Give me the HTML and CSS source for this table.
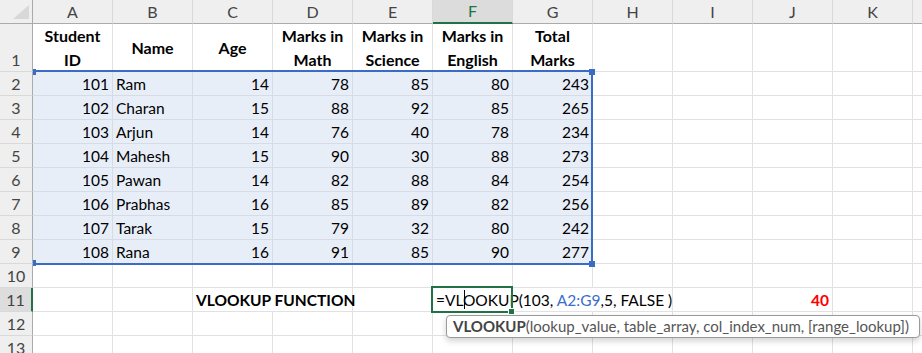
FILE: index.html
```html
<!DOCTYPE html>
<html>
<head>
<meta charset="utf-8">
<link rel="stylesheet" href="styles.css">
</head>
<body>
<div class="sheet">
  <div class="grid">
    <div class="corner"><svg class="corner-tri" width="16" height="14" viewBox="0 0 16 14"><polygon points="16,0 16,14 0,14" fill="#d8d8d8"/></svg></div>
    <div class="ch">A</div><div class="ch">B</div><div class="ch">C</div><div class="ch">D</div><div class="ch">E</div><div class="ch active">F</div><div class="ch">G</div><div class="ch">H</div><div class="ch">I</div><div class="ch">J</div><div class="ch">K</div><div class="ch"></div>

    <div class="rh">1</div>
    <div class="c hd">Student<br>ID</div><div class="c hd">Name</div><div class="c hd">Age</div><div class="c hd">Marks in<br>Math</div><div class="c hd">Marks in<br>Science</div><div class="c hd">Marks in<br>English</div><div class="c hd">Total<br>Marks</div><div class="c"></div><div class="c"></div><div class="c"></div><div class="c"></div><div class="c"></div>

    <div class="rh">2</div>
    <div class="c sel num">101</div><div class="c sel">Ram</div><div class="c sel num">14</div><div class="c sel num">78</div><div class="c sel num">85</div><div class="c sel num">80</div><div class="c sel num">243</div><div class="c"></div><div class="c"></div><div class="c"></div><div class="c"></div><div class="c"></div>

    <div class="rh">3</div>
    <div class="c sel num">102</div><div class="c sel">Charan</div><div class="c sel num">15</div><div class="c sel num">88</div><div class="c sel num">92</div><div class="c sel num">85</div><div class="c sel num">265</div><div class="c"></div><div class="c"></div><div class="c"></div><div class="c"></div><div class="c"></div>

    <div class="rh">4</div>
    <div class="c sel num">103</div><div class="c sel">Arjun</div><div class="c sel num">14</div><div class="c sel num">76</div><div class="c sel num">40</div><div class="c sel num">78</div><div class="c sel num">234</div><div class="c"></div><div class="c"></div><div class="c"></div><div class="c"></div><div class="c"></div>

    <div class="rh">5</div>
    <div class="c sel num">104</div><div class="c sel">Mahesh</div><div class="c sel num">15</div><div class="c sel num">90</div><div class="c sel num">30</div><div class="c sel num">88</div><div class="c sel num">273</div><div class="c"></div><div class="c"></div><div class="c"></div><div class="c"></div><div class="c"></div>

    <div class="rh">6</div>
    <div class="c sel num">105</div><div class="c sel">Pawan</div><div class="c sel num">14</div><div class="c sel num">82</div><div class="c sel num">88</div><div class="c sel num">84</div><div class="c sel num">254</div><div class="c"></div><div class="c"></div><div class="c"></div><div class="c"></div><div class="c"></div>

    <div class="rh">7</div>
    <div class="c sel num">106</div><div class="c sel">Prabhas</div><div class="c sel num">16</div><div class="c sel num">85</div><div class="c sel num">89</div><div class="c sel num">82</div><div class="c sel num">256</div><div class="c"></div><div class="c"></div><div class="c"></div><div class="c"></div><div class="c"></div>

    <div class="rh">8</div>
    <div class="c sel num">107</div><div class="c sel">Tarak</div><div class="c sel num">15</div><div class="c sel num">79</div><div class="c sel num">32</div><div class="c sel num">80</div><div class="c sel num">242</div><div class="c"></div><div class="c"></div><div class="c"></div><div class="c"></div><div class="c"></div>

    <div class="rh">9</div>
    <div class="c sel num">108</div><div class="c sel">Rana</div><div class="c sel num">16</div><div class="c sel num">91</div><div class="c sel num">85</div><div class="c sel num">90</div><div class="c sel num">277</div><div class="c"></div><div class="c"></div><div class="c"></div><div class="c"></div><div class="c"></div>

    <div class="rh">10</div>
    <div class="c"></div><div class="c"></div><div class="c"></div><div class="c"></div><div class="c"></div><div class="c"></div><div class="c"></div><div class="c"></div><div class="c"></div><div class="c"></div><div class="c"></div><div class="c"></div>

    <div class="rh active">11</div>
    <div class="c"></div><div class="c"></div><div class="c span2 bold">VLOOKUP FUNCTION</div><div class="c"></div><div class="c span3 formula">=VLOOKUP(103, <span class="ref">A2:G9</span>,5, FALSE )</div><div class="c"></div><div class="c num result">40</div><div class="c"></div><div class="c"></div>

    <div class="rh">12</div>
    <div class="c"></div><div class="c"></div><div class="c"></div><div class="c"></div><div class="c"></div><div class="c"></div><div class="c"></div><div class="c"></div><div class="c"></div><div class="c"></div><div class="c"></div><div class="c"></div>

    <div class="rh">13</div>
    <div class="c"></div><div class="c"></div><div class="c"></div><div class="c"></div><div class="c"></div><div class="c"></div><div class="c"></div><div class="c"></div><div class="c"></div><div class="c"></div><div class="c"></div><div class="c"></div>
  </div>

  <div class="range">
    <span class="handle h-tl"></span>
    <span class="handle h-tr"></span>
    <span class="handle h-bl"></span>
    <span class="handle h-br"></span>
  </div>
  <div class="active-box"><span class="fill-handle"></span></div>
  <div class="caret"></div>
  <div class="tooltip"><b>VLOOKUP</b>(lookup_value, table_array, col_index_num, [range_lookup])</div>
</div>
</body>
</html>
```

FILE: styles.css
```css
html, body {
  margin: 0;
  padding: 0;
  background: #ffffff;
  overflow: hidden;
}

.sheet {
  position: relative;
  width: 922px;
  height: 353px;
  overflow: hidden;
  font-family: Lato, "Liberation Sans", sans-serif;
}

.grid {
  display: grid;
  grid-template-columns: 33px repeat(12, 80px);
  grid-template-rows: 24px 48px repeat(12, 24px);
}

.grid > div {
  box-sizing: border-box;
}

.corner {
  background: #efefef;
  border-right: 1px solid #ababab;
  border-bottom: 1px solid #ababab;
  position: relative;
}

.corner-tri {
  position: absolute;
  left: 13px;
  top: 5px;
}

.ch {
  background: #efefef;
  border-right: 1px solid #d9d9d9;
  border-bottom: 1px solid #ababab;
  color: #444444;
  font-size: 16px;
  line-height: 23px;
  text-align: center;
}

.ch.active {
  background: #dcdcdc;
  color: #217346;
  border-bottom: 2px solid #217346;
  line-height: 22px;
}

.rh {
  background: #efefef;
  border-right: 1px solid #ababab;
  border-bottom: 1px solid #d9d9d9;
  color: #444444;
  font-size: 16px;
  line-height: 23px;
  text-align: center;
  display: flex;
  align-items: flex-end;
  justify-content: center;
}

.rh.active {
  background: #dddddd;
  border-right: 2px solid #217346;
}

.c {
  border-right: 1px solid #e1e1e1;
  border-bottom: 1px solid #e1e1e1;
  padding: 1px 3px 0 3px;
  font-size: 15.5px;
  line-height: 23px;
  color: #000000;
  white-space: nowrap;
  overflow: visible;
}

.c.sel {
  background: #e8eef8;
  border-color: #d6dbe4;
}

.c.num {
  text-align: right;
}

.c.hd {
  font-size: 16px;
  font-weight: bold;
  text-align: center;
  line-height: 24px;
  padding: 0;
  display: flex;
  flex-direction: column;
  justify-content: center;
}

.c.span2 {
  grid-column: span 2;
}

.c.span3 {
  grid-column: span 3;
}

.c.bold {
  font-weight: bold;
}

.formula .ref {
  color: #3a6fcc;
}

.c.result {
  color: #ff0000;
  font-weight: bold;
}

.range {
  position: absolute;
  left: 33px;
  top: 70px;
  width: 560px;
  height: 195px;
  box-sizing: border-box;
  border-top: 2px solid #3a6cc6;
  border-right: 2px solid #3a6cc6;
  border-bottom: 2px solid #3a6cc6;
}

.handle {
  position: absolute;
  width: 6px;
  height: 6px;
  background: #3a6cc6;
}

.h-tl { left: 0; top: -3px; width: 3px; }
.h-tr { right: -4px; top: -3px; }
.h-bl { left: 0; bottom: -3px; width: 3px; }
.h-br { right: -4px; bottom: -4px; }

.active-box {
  position: absolute;
  left: 431px;
  top: 286px;
  width: 82px;
  height: 27px;
  box-sizing: border-box;
  border: 2px solid #217346;
}

.fill-handle {
  position: absolute;
  right: -4px;
  bottom: -4px;
  width: 5px;
  height: 5px;
  background: #217346;
  border: 1px solid #ffffff;
}

.caret {
  position: absolute;
  left: 464px;
  top: 290px;
  width: 1px;
  height: 19px;
  background: #000000;
}

.tooltip {
  position: absolute;
  left: 446px;
  top: 315px;
  width: 474px;
  height: 23px;
  box-sizing: border-box;
  padding: 0 6px;
  border: 1px solid #9a9a9a;
  border-radius: 4px;
  background: #ffffff;
  box-shadow: 0 3px 6px rgba(0, 0, 0, 0.18);
  font-size: 15px;
  line-height: 21px;
  color: #555555;
  white-space: nowrap;
}

.tooltip b {
  color: #444444;
}
```
